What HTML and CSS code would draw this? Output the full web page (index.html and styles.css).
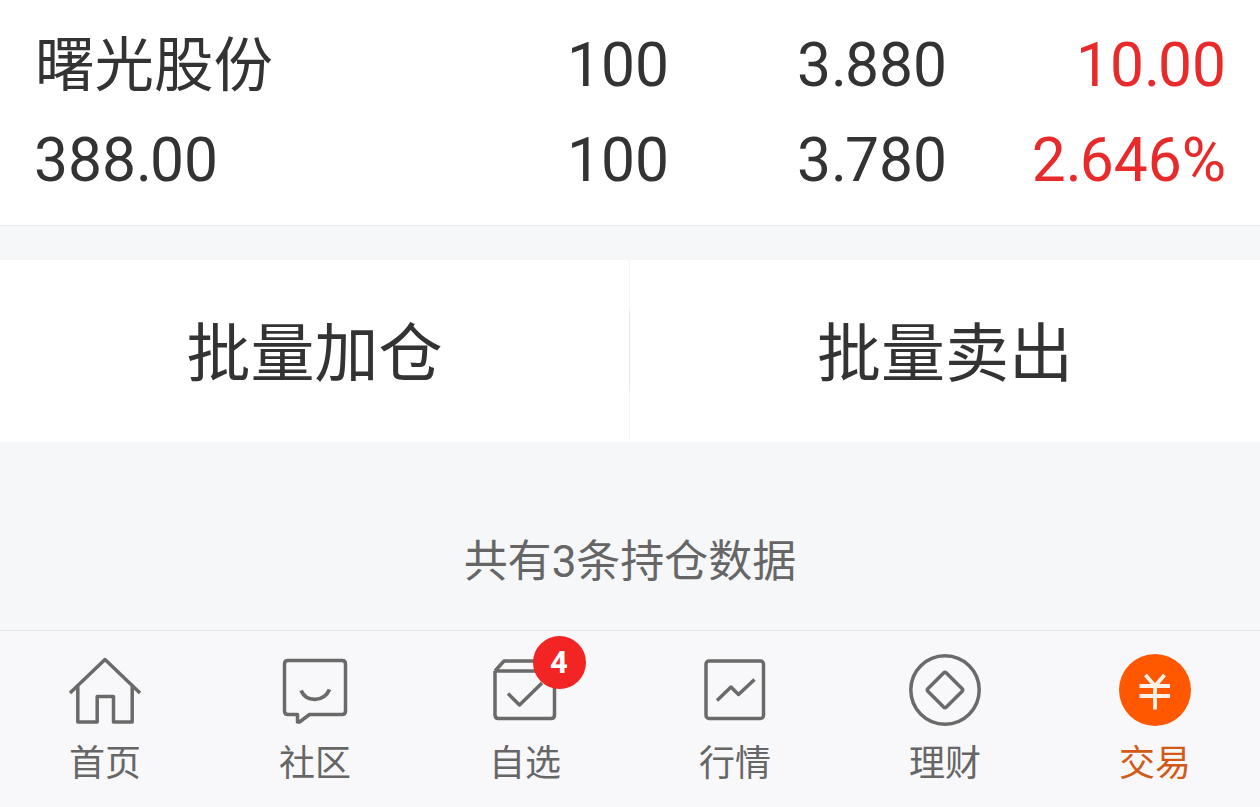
FILE: index.html
```html
<!DOCTYPE html>
<html lang="zh-CN">
<head>
<meta charset="utf-8">
<title>持仓</title>
<link rel="stylesheet" href="styles.css">
</head>
<body>
<main class="screen">
  <section class="holding">
    <div class="row">
      <span class="name">曙光股份</span><span class="num">100</span><span class="num">3<i class="dot">.</i>880</span><span class="num gain">10<i class="dot">.</i>00</span>
    </div>
    <div class="row">
      <span class="num value">388<i class="dot">.</i>00</span><span class="num">100</span><span class="num">3<i class="dot">.</i>780</span><span class="num gain rate">2<i class="dot">.</i>646%</span>
    </div>
  </section>
  <section class="actions">
    <div class="action">批量加仓</div>
    <div class="divider"></div>
    <div class="action">批量卖出</div>
  </section>
  <p class="summary">共有<span class="digit">3</span>条持仓数据</p>
  <nav class="tabs">
    <a class="tab">
      <svg class="icon" viewBox="0 0 80 76"><path d="M5 38 40 4.500 75 38M12.800 31V67H32.200V41.500H48.500V67H67.200V31" /></svg>
      <span>首页</span>
    </a>
    <a class="tab">
      <svg class="icon" viewBox="0 0 80 76"><path d="M13 5.500H67Q70.500 5.500 70.500 9V56Q70.500 59.500 67 59.500H34.500L24.500 67H22.500V59.500H13Q9.500 59.500 9.500 56V9Q9.500 5.500 13 5.500Z"/><path class="smile" d="M26 35.500C31.500 47.500 48.500 47.500 54.500 34.500"/></svg>
      <span>社区</span>
    </a>
    <a class="tab">
      <svg class="icon" viewBox="0 0 80 76"><path d="M10 16 19 6H62L69.500 16M10 16H69.500V60Q69.500 63.500 66 63.500H13.500Q10 63.500 10 60V16"/><path d="M23 38.500 34.500 50 57 28"/></svg>
      <span class="badge">4</span>
      <span>自选</span>
    </a>
    <a class="tab">
      <svg class="icon" viewBox="0 0 80 76"><rect x="11" y="6" width="57.500" height="57.500" rx="3"/><path d="M22 45.500 36 32 43.500 39.500 59.500 24.500"/></svg>
      <span>行情</span>
    </a>
    <a class="tab">
      <svg class="icon" viewBox="0 0 80 76"><circle cx="40" cy="35" r="34.200"/><rect x="27" y="22" width="26" height="26" rx="2" transform="rotate(45 40 35)"/></svg>
      <span>理财</span>
    </a>
    <a class="tab active">
      <svg class="icon" viewBox="0 0 80 76"><circle class="coin" cx="40" cy="35" r="36"/><path class="yen" d="M30.500 20 40 31 49.500 20M24.500 31H55M24.500 41H55M40 30V54.500"/></svg>
      <span>交易</span>
    </a>
  </nav>
</main>
</body>
</html>
```
FILE: styles.css
```css
* { box-sizing: border-box; }
body { margin: 0; font-family: "Noto Sans CJK SC", sans-serif; color: #333; background: #f6f7f9; }
.screen { width: 1260px; height: 807px; display: flex; flex-direction: column; overflow: hidden; }
.holding { height: 226px; padding: 18px 35px 0; background: #fff; border-bottom: 1px solid #e8eaec; }
.row { display: grid; grid-template-columns: 356px 278px 278px 279px; height: 95px; line-height: 95px; font-size: 59.5px; white-space: nowrap; }
.name { line-height: 85px; }
.num { font-family: Roboto, sans-serif; font-size: 60.5px; text-align: right; }
.value { text-align: left; margin-left: -1px; }
.dot { font-style: normal; letter-spacing: -2px; }
.gain { color: #e82a2a; }
.actions { display: grid; grid-template-columns: 629px 1px 630px; height: 182px; margin-top: 34px; background: #fff; }
.action { text-align: center; font-size: 64px; line-height: 176px; }
.divider { width: 1px; background: linear-gradient(#f5f5f6 50px, #eaeaea 50px, #eaeaea 131px, #f5f5f6 131px); }
.summary { flex: 1; margin: 0; padding-top: 83px; text-align: center; font-size: 44px; line-height: 66px; color: #666; }
.digit { font-family: Roboto, sans-serif; }
.tabs { display: grid; grid-template-columns: repeat(6, 1fr); height: 177px; background: #f8f8fa; border-top: 1px solid #e1e2e4; }
.tab { position: relative; display: flex; flex-direction: column; align-items: center; padding-top: 24px; font-size: 36px; line-height: 58px; color: #666; }
.icon { width: 80px; height: 76px; fill: none; stroke: #6a6a6a; stroke-width: 3.500; stroke-linejoin: round; overflow: visible; }
.smile { stroke-width: 3.800; }
.badge { position: absolute; left: 112.500px; top: 4.500px; width: 53px; height: 53px; border-radius: 50%; background: #f22424; color: #fff; font: bold 31px/53px Roboto, sans-serif; text-align: center; }
.active { color: #d25a18; }
.coin { fill: #ff5800; stroke: none; }
.yen { stroke: #fff2e8; stroke-width: 3.800; }
```
